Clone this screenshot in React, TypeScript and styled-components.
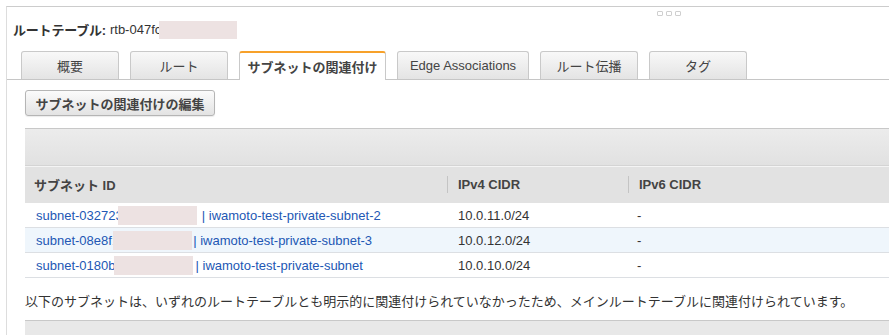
import React from "react";
import styled, { createGlobalStyle } from "styled-components";

const GlobalStyle = createGlobalStyle`
    html, body {
        margin: 0;
        padding: 0;
        background: #ffffff;
    }
    body {
        font-family: "Liberation Sans", Arial, "Noto Sans CJK JP", sans-serif;
        font-size: 13px;
        color: #333333;
    }
`;

const Page = styled.div`
    padding: 6px 0 0 6px;
    width: 889px;
    height: 335px;
    box-sizing: border-box;
    overflow: hidden;
`;

const Panel = styled.div`
    position: relative;
    border-top: 1px solid #cccccc;
    border-left: 1px solid #dddddd;
    height: 100%;
`;

const ResizeDots = styled.div`
    position: absolute;
    top: 4px;
    left: 650px;
    display: flex;
    gap: 3px;
`;

const Dot = styled.span`
    width: 4px;
    height: 3px;
    border: 1px solid #cfcfcf;
    border-radius: 1px;
`;

const Title = styled.div`
    padding: 8px 0 0 6px;
    height: 37px;
    box-sizing: border-box;
    display: flex;
    align-items: center;
    font-size: 13px;
    color: #333;
`;

const TitleLabel = styled.span`
    font-weight: bold;
    letter-spacing: -0.2px;
    margin-right: 4px;
`;

const Redact = styled.span<{ $w: number; $h: number; $shift?: number; $after?: number }>`
    display: inline-block;
    width: ${(p) => p.$w}px;
    height: ${(p) => p.$h}px;
    margin-left: ${(p) => p.$shift ?? 0}px;
    margin-right: ${(p) => p.$after ?? 0}px;
    background: #ede2e2;
    vertical-align: middle;
`;

const TabBar = styled.div`
    margin-top: 7px;
    display: flex;
    align-items: flex-end;
    gap: 11px;
    padding-left: 14px;
    height: 29px;
    border-bottom: 1px solid #c6c6c6;
    box-sizing: border-box;
`;

const Tab = styled.div<{ $w: number; $active?: boolean }>`
    width: ${(p) => p.$w}px;
    height: ${(p) => (p.$active ? 29 : 28)}px;
    margin-bottom: ${(p) => (p.$active ? -1 : 0)}px;
    box-sizing: border-box;
    display: flex;
    align-items: center;
    justify-content: center;
    border: 1px solid #c9c9c9;
    border-bottom: none;
    border-radius: 3px 3px 0 0;
    border-top: ${(p) => (p.$active ? "2px solid #f7a12a" : "1px solid #c9c9c9")};
    background: ${(p) => (p.$active ? "#ffffff" : "linear-gradient(#f8f8f8, #e4e4e4)")};
    font-weight: ${(p) => (p.$active ? "bold" : "normal")};
    color: #444;
    font-size: 13px;
`;

const Content = styled.div`
    padding: 10px 0 0 18px;
`;

const EditButton = styled.button`
    font-family: inherit;
    font-size: 13px;
    font-weight: bold;
    color: #444;
    width: 190px;
    height: 26px;
    padding: 0;
    border: 1px solid #b5b5b5;
    border-radius: 3px;
    background: linear-gradient(#fbfbfb, #e3e3e3);
    box-shadow: 0 1px 1px rgba(0, 0, 0, 0.08);
`;

const Table = styled.div`
    margin-top: 12px;
`;

const FilterBar = styled.div`
    height: 37px;
    box-sizing: border-box;
    border-top: 1px solid #c8c8c8;
    background: linear-gradient(#ececec, #e1e1e1);
`;

const Grid = styled.div`
    display: grid;
    grid-template-columns: 422px 181px 1fr;
`;

const HeaderRow = styled(Grid)`
    height: 38px;
    box-sizing: border-box;
    border-top: 1px solid #d4d4d4;
    box-shadow: inset 0 1px 0 #f4f4f4;
    background: #e2e2e2;
`;

const HeaderCell = styled.div<{ $pad: number }>`
    display: flex;
    align-items: center;
    padding-left: ${(p) => p.$pad}px;
    font-weight: bold;
    color: #444;
`;

const Divider = styled.span`
    width: 1px;
    height: 17px;
    background: #c4c4c4;
    margin-right: 10px;
`;

const Row = styled(Grid)<{ $alt?: boolean }>`
    height: 25px;
    box-sizing: border-box;
    border-bottom: 1px solid #dcdfe3;
    background: ${(p) => (p.$alt ? "#eff6fc" : "#ffffff")};
`;

const Cell = styled.div<{ $pad: number; $link?: boolean }>`
    display: flex;
    align-items: center;
    padding-left: ${(p) => p.$pad}px;
    color: ${(p) => (p.$link ? "#2257b4" : "#333")};
    white-space: nowrap;
`;

const Note = styled.div`
    margin-top: 14px;
    line-height: 20px;
    color: #333;
`;

const SecondTable = styled.div`
    margin-top: 8px;
    height: 40px;
    border-top: 1px solid #c8c8c8;
    background: #e8e8e8;
`;

const tabs = [
    { label: "概要", w: 98 },
    { label: "ルート", w: 98 },
    { label: "サブネットの関連付け", w: 147, active: true },
    { label: "Edge Associations", w: 132 },
    { label: "ルート伝播", w: 98 },
    { label: "タグ", w: 98 },
];

const subnets = [
    { id: "subnet-032723", shift: -5, after: 5, name: "iwamoto-test-private-subnet-2", cidr: "10.0.11.0/24" },
    { id: "subnet-08e8f1", shift: -6, after: 1, name: "iwamoto-test-private-subnet-3", cidr: "10.0.12.0/24" },
    { id: "subnet-0180b", shift: -2, after: 3, name: "iwamoto-test-private-subnet", cidr: "10.0.10.0/24" },
];

export default function App() {
    return (
        <Page>
            <GlobalStyle />
            <Panel>
                <ResizeDots>
                    <Dot />
                    <Dot />
                    <Dot />
                </ResizeDots>
                <Title>
                    <TitleLabel>ルートテーブル:</TitleLabel>
                    rtb-047fc
                    <Redact $w={78} $h={18} $shift={-2} />
                </Title>
                <TabBar>
                    {tabs.map((t) => (
                        <Tab key={t.label} $w={t.w} $active={t.active}>
                            {t.label}
                        </Tab>
                    ))}
                </TabBar>
                <Content>
                    <EditButton>サブネットの関連付けの編集</EditButton>
                    <Table>
                        <FilterBar />
                        <HeaderRow>
                            <HeaderCell $pad={9}>サブネット ID</HeaderCell>
                            <HeaderCell $pad={0}>
                                <Divider />
                                IPv4 CIDR
                            </HeaderCell>
                            <HeaderCell $pad={0}>
                                <Divider />
                                IPv6 CIDR
                            </HeaderCell>
                        </HeaderRow>
                        {subnets.map((s, i) => (
                            <Row key={s.name} $alt={i === 1}>
                                <Cell $pad={11} $link>
                                    {s.id}
                                    <Redact $w={79} $h={19} $shift={s.shift} $after={s.after} />
                                    | {s.name}
                                </Cell>
                                <Cell $pad={11}>{s.cidr}</Cell>
                                <Cell $pad={9}>-</Cell>
                            </Row>
                        ))}
                    </Table>
                    <Note>
                        以下のサブネットは、いずれのルートテーブルとも明示的に関連付けられていなかったため、メインルートテーブルに関連付けられています。
                    </Note>
                    <SecondTable />
                </Content>
            </Panel>
        </Page>
    );
}
